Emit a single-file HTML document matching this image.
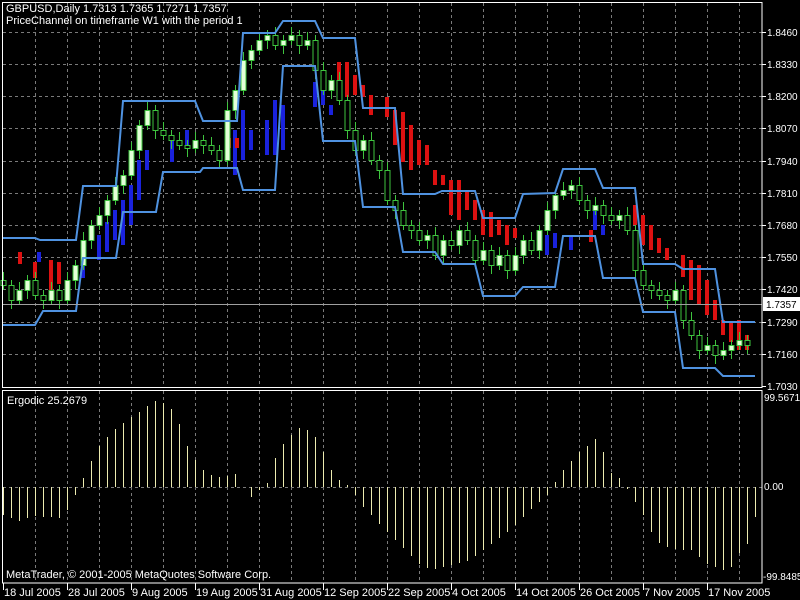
<!DOCTYPE html>
<html><head><meta charset="utf-8"><style>
html,body{margin:0;padding:0;background:#000;width:800px;height:600px;overflow:hidden}
svg{display:block}
text{font-family:"Liberation Sans",sans-serif;font-size:11px;fill:#fff}
.ra{font-size:10px}
.u{fill:#e4ffd8;stroke:#3ec43e;stroke-width:1}
.d{fill:#000;stroke:#3ec43e;stroke-width:1}
</style></head><body>
<svg width="800" height="600" xmlns="http://www.w3.org/2000/svg">
<rect width="800" height="600" fill="#000"/>
<path fill="none" stroke="#7a7a7a" stroke-dasharray="3,3" d="M3 32.5H762M3 64.5H762M3 96.5H762M3 128.5H762M3 161.5H762M3 193.5H762M3 225.5H762M3 257.5H762M3 289.5H762M3 322.5H762M3 354.5H762M3 487.5H762
M35.5 3V387M67.5 3V387M99.5 3V387M131.5 3V387M163.5 3V387M195.5 3V387M227.5 3V387M259.5 3V387M291.5 3V387M323.5 3V387M355.5 3V387M387.5 3V387M419.5 3V387M451.5 3V387M483.5 3V387M515.5 3V387M547.5 3V387M579.5 3V387M611.5 3V387M643.5 3V387M675.5 3V387M707.5 3V387M739.5 3V387
M35.5 391V583M67.5 391V583M99.5 391V583M131.5 391V583M163.5 391V583M195.5 391V583M227.5 391V583M259.5 391V583M291.5 391V583M323.5 391V583M355.5 391V583M387.5 391V583M419.5 391V583M451.5 391V583M483.5 391V583M515.5 391V583M547.5 391V583M579.5 391V583M611.5 391V583M643.5 391V583M675.5 391V583M707.5 391V583M739.5 391V583"/>
<g fill="#1a22dd">
<rect x="81" y="250" width="4" height="28"/><rect x="97" y="235" width="4" height="25"/><rect x="105" y="222" width="4" height="30"/><rect x="113" y="210" width="4" height="30"/><rect x="121" y="200" width="4" height="45"/><rect x="129" y="185" width="4" height="40"/><rect x="137" y="160" width="4" height="40"/><rect x="145" y="150" width="4" height="20"/>
<rect x="170" y="140" width="4" height="22"/><rect x="185" y="130" width="4" height="15"/>
<rect x="233" y="130" width="4" height="45"/><rect x="241" y="110" width="4" height="50"/><rect x="249" y="130" width="4" height="20"/><rect x="265" y="120" width="4" height="35"/><rect x="273" y="100" width="4" height="55"/><rect x="281" y="105" width="4" height="45"/><rect x="313" y="82" width="4" height="25"/><rect x="321" y="90" width="4" height="15"/><rect x="329" y="105" width="4" height="10"/>
<rect x="545" y="235" width="4" height="20"/><rect x="553" y="233" width="4" height="15"/><rect x="569" y="235" width="4" height="15"/><rect x="593" y="205" width="4" height="25"/><rect x="601" y="225" width="4" height="10"/><rect x="37" y="252" width="4" height="10"/>
</g>
<g fill="#dd1111">
<rect x="33" y="262" width="4" height="16"/><rect x="49" y="260" width="4" height="30"/><rect x="57" y="262" width="4" height="22"/><rect x="18" y="252" width="4" height="12"/>
<rect x="227" y="138" width="4" height="10"/><rect x="235" y="138" width="4" height="10"/>
<rect x="337" y="62" width="4" height="22"/><rect x="345" y="62" width="4" height="35"/><rect x="353" y="75" width="4" height="20"/><rect x="361" y="85" width="4" height="12"/><rect x="369" y="95" width="4" height="20"/><rect x="385" y="97" width="4" height="20"/><rect x="393" y="110" width="4" height="35"/><rect x="401" y="112" width="4" height="50"/><rect x="409" y="125" width="4" height="45"/><rect x="417" y="140" width="4" height="25"/><rect x="425" y="145" width="4" height="20"/><rect x="433" y="170" width="4" height="15"/><rect x="441" y="175" width="4" height="10"/><rect x="449" y="180" width="4" height="35"/><rect x="457" y="180" width="4" height="40"/><rect x="465" y="190" width="4" height="20"/><rect x="473" y="200" width="4" height="20"/><rect x="481" y="210" width="4" height="25"/><rect x="489" y="212" width="4" height="25"/><rect x="497" y="220" width="4" height="15"/><rect x="505" y="225" width="4" height="20"/><rect x="513" y="228" width="4" height="10"/>
<rect x="589" y="230" width="4" height="12"/><rect x="633" y="205" width="4" height="20"/><rect x="641" y="215" width="4" height="30"/><rect x="649" y="225" width="4" height="25"/><rect x="657" y="238" width="4" height="15"/><rect x="665" y="248" width="4" height="12"/>
<rect x="681" y="255" width="4" height="22"/><rect x="689" y="260" width="4" height="40"/><rect x="697" y="265" width="4" height="40"/><rect x="705" y="280" width="4" height="35"/><rect x="713" y="300" width="4" height="20"/><rect x="721" y="320" width="4" height="15"/><rect x="729" y="322" width="4" height="20"/><rect x="737" y="320" width="4" height="30"/><rect x="745" y="335" width="4" height="15"/>
</g>
<path fill="none" stroke="#3ec43e" d="M3.5 272V290M11.5 280V309M19.5 282V305M27.5 275V299M35.5 272V300M43.5 290V309M51.5 282V305M59.5 285V309M67.5 272V305M75.5 260V289M83.5 232V270M91.5 220V249M99.5 207V230M107.5 195V224M115.5 177V205M123.5 170V194M131.5 142V180M139.5 120V159M147.5 102V130M155.5 105V139M163.5 122V140M171.5 130V149M179.5 132V150M187.5 140V157M195.5 132V153M203.5 135V154M211.5 137V155M219.5 145V169M227.5 102V165M235.5 85V119M243.5 52V95M251.5 45V69M259.5 32V55M267.5 30V49M275.5 27V50M283.5 35V54M291.5 27V45M299.5 30V54M307.5 32V50M315.5 35V79M323.5 62V95M331.5 75V99M339.5 72V105M347.5 95V139M355.5 122V155M363.5 135V159M371.5 132V165M379.5 155V179M387.5 162V205M395.5 195V219M403.5 202V230M411.5 220V239M419.5 222V245M427.5 230V249M435.5 227V260M443.5 235V264M451.5 232V250M459.5 225V254M467.5 222V245M475.5 235V269M483.5 242V265M491.5 245V274M499.5 247V270M507.5 250V279M515.5 247V275M523.5 235V264M531.5 232V255M539.5 225V259M547.5 202V235M555.5 190V219M563.5 182V200M571.5 180V199M579.5 177V205M587.5 195V219M595.5 197V215M603.5 200V224M611.5 207V225M619.5 210V229M627.5 207V235M635.5 225V279M643.5 262V290M651.5 280V299M659.5 282V300M667.5 290V309M675.5 282V305M683.5 285V329M691.5 312V340M699.5 330V359M707.5 337V355M715.5 340V364M723.5 342V360M731.5 340V359M739.5 332V350M747.5 335V354"/>
<g class="d">
<rect x="1" y="280.5" width="5" height="5"/><rect x="9" y="285.5" width="5" height="15"/><rect x="33" y="280.5" width="5" height="15"/><rect x="41" y="295.5" width="5" height="5"/><rect x="57" y="290.5" width="5" height="10"/>
<rect x="153" y="110.5" width="5" height="20"/><rect x="161" y="130.5" width="5" height="5"/><rect x="169" y="135.5" width="5" height="5"/><rect x="177" y="140.5" width="5" height="5"/><rect x="185" y="145.5" width="5" height="3"/><rect x="201" y="140.5" width="5" height="5"/><rect x="209" y="145.5" width="5" height="5"/><rect x="217" y="150.5" width="5" height="10"/>
<rect x="273" y="35.5" width="5" height="10"/><rect x="297" y="35.5" width="5" height="10"/><rect x="313" y="40.5" width="5" height="30"/><rect x="321" y="70.5" width="5" height="20"/><rect x="337" y="80.5" width="5" height="20"/><rect x="345" y="100.5" width="5" height="30"/><rect x="353" y="130.5" width="5" height="20"/><rect x="369" y="140.5" width="5" height="20"/><rect x="377" y="160.5" width="5" height="10"/><rect x="385" y="170.5" width="5" height="30"/><rect x="393" y="200.5" width="5" height="10"/><rect x="401" y="210.5" width="5" height="15"/><rect x="409" y="225.5" width="5" height="5"/><rect x="417" y="230.5" width="5" height="10"/><rect x="433" y="235.5" width="5" height="20"/><rect x="449" y="240.5" width="5" height="5"/><rect x="465" y="230.5" width="5" height="10"/><rect x="473" y="240.5" width="5" height="20"/><rect x="489" y="250.5" width="5" height="15"/><rect x="505" y="255.5" width="5" height="15"/><rect x="529" y="240.5" width="5" height="10"/>
<rect x="577" y="185.5" width="5" height="15"/><rect x="585" y="200.5" width="5" height="10"/><rect x="601" y="205.5" width="5" height="10"/><rect x="609" y="215.5" width="5" height="5"/><rect x="625" y="215.5" width="5" height="15"/><rect x="633" y="230.5" width="5" height="40"/><rect x="641" y="270.5" width="5" height="15"/><rect x="649" y="285.5" width="5" height="5"/><rect x="657" y="290.5" width="5" height="5"/><rect x="665" y="295.5" width="5" height="5"/><rect x="681" y="290.5" width="5" height="30"/><rect x="689" y="320.5" width="5" height="15"/><rect x="697" y="335.5" width="5" height="15"/><rect x="713" y="345.5" width="5" height="10"/><rect x="745" y="340.5" width="5" height="5"/>
</g>
<g class="u">
<rect x="17" y="290.5" width="5" height="10"/><rect x="25" y="280.5" width="5" height="10"/><rect x="49" y="290.5" width="5" height="10"/><rect x="65" y="280.5" width="5" height="20"/><rect x="73" y="265.5" width="5" height="15"/><rect x="81" y="240.5" width="5" height="25"/><rect x="89" y="225.5" width="5" height="15"/><rect x="97" y="215.5" width="5" height="10"/><rect x="105" y="200.5" width="5" height="15"/><rect x="113" y="185.5" width="5" height="15"/><rect x="121" y="175.5" width="5" height="10"/><rect x="129" y="150.5" width="5" height="25"/><rect x="137" y="125.5" width="5" height="25"/><rect x="145" y="110.5" width="5" height="15"/><rect x="193" y="140.5" width="5" height="8"/>
<rect x="225" y="110.5" width="5" height="50"/><rect x="233" y="90.5" width="5" height="20"/><rect x="241" y="60.5" width="5" height="30"/><rect x="249" y="50.5" width="5" height="10"/><rect x="257" y="40.5" width="5" height="10"/><rect x="265" y="35.5" width="5" height="5"/><rect x="281" y="40.5" width="5" height="5"/><rect x="289" y="35.5" width="5" height="5"/><rect x="305" y="40.5" width="5" height="5"/><rect x="329" y="80.5" width="5" height="10"/><rect x="361" y="140.5" width="5" height="10"/>
<rect x="425" y="235.5" width="5" height="5"/><rect x="441" y="240.5" width="5" height="15"/><rect x="457" y="230.5" width="5" height="15"/><rect x="481" y="250.5" width="5" height="10"/><rect x="497" y="255.5" width="5" height="10"/><rect x="513" y="255.5" width="5" height="15"/><rect x="521" y="240.5" width="5" height="15"/><rect x="537" y="230.5" width="5" height="20"/><rect x="545" y="210.5" width="5" height="20"/><rect x="553" y="195.5" width="5" height="15"/><rect x="561" y="190.5" width="5" height="5"/><rect x="569" y="185.5" width="5" height="5"/><rect x="593" y="205.5" width="5" height="5"/><rect x="617" y="215.5" width="5" height="5"/><rect x="673" y="290.5" width="5" height="10"/><rect x="705" y="345.5" width="5" height="5"/><rect x="721" y="350.5" width="5" height="5"/><rect x="729" y="345.5" width="5" height="5"/><rect x="737" y="340.5" width="5" height="5"/>
</g>
<g fill="none" stroke="#4f92e0" stroke-width="2">
<polyline points="3,238 35,238 40,240 76,240 83,186 116,186 123,101 195,101 203,121 237,121 243,33 275,33 283,21 315,21 323,38 355,38 363,108 395,108 403,194 435,194 442,191 475,191 483,218 515,218 523,194 555,193 563,169 595,169 603,188 635,188 643,264 675,264 683,269 715,269 723,322 755,322"/>
<polyline points="3,325 35,325 43,311 76,311 83,258 116,258 123,212 156,212 163,172 200,172 203,168 237,168 243,190 275,190 283,66 315,66 323,141 355,141 363,207 395,207 403,252 435,252 443,264 475,264 483,296 515,296 523,287 555,287 563,236 595,236 603,278 635,278 643,312 675,312 683,368 715,368 723,376 755,376"/>
</g>
<path fill="none" stroke="#ecebb0" d="M3.5 487V515M11.5 487V518M19.5 487V521M27.5 487V518M35.5 487V516M43.5 487V517M51.5 487V517M59.5 487V518M67.5 487V510M75.5 487V495M83.5 487V478M91.5 487V461M99.5 487V446M107.5 487V437M115.5 487V429M123.5 487V423M131.5 487V417M139.5 487V412M147.5 487V406M155.5 487V401M163.5 487V403M171.5 487V409M179.5 487V424M187.5 487V446M195.5 487V460M203.5 487V470M211.5 487V475M219.5 487V477M227.5 487V476M235.5 487V474M251.5 487V497M259.5 487V490M267.5 487V483M275.5 487V458M283.5 487V444M291.5 487V435M299.5 487V428M307.5 487V430M315.5 487V437M323.5 487V452M331.5 487V470M339.5 487V480M347.5 487V485M355.5 487V495M363.5 487V507M371.5 487V515M379.5 487V524M387.5 487V532M395.5 487V540M403.5 487V548M411.5 487V556M419.5 487V564M427.5 487V568M435.5 487V569M443.5 487V567M451.5 487V565M459.5 487V563M467.5 487V561M475.5 487V556M483.5 487V550M491.5 487V544M499.5 487V538M507.5 487V532M515.5 487V525M523.5 487V517M531.5 487V509M539.5 487V502M547.5 487V495M555.5 487V482M563.5 487V470M571.5 487V461M579.5 487V452M587.5 487V446M595.5 487V439M603.5 487V452M611.5 487V473M619.5 487V478M627.5 487V489M635.5 487V502M643.5 487V515M651.5 487V532M659.5 487V543M667.5 487V547M675.5 487V549M683.5 487V550M691.5 487V550M699.5 487V557M707.5 487V564M715.5 487V567M723.5 487V570M731.5 487V567M739.5 487V553M747.5 487V544M755.5 487V517"/>
<line x1="3" y1="304.5" x2="762" y2="304.5" stroke="#a0a0a0"/>
<g stroke="#fff" stroke-width="1" fill="none">
<rect x="2.5" y="2.5" width="759.5" height="385"/>
<rect x="2.5" y="390.5" width="759.5" height="192.5"/>
<path d="M762 32.5h4M762 64.5h4M762 96.5h4M762 128.5h4M762 161.5h4M762 193.5h4M762 225.5h4M762 257.5h4M762 289.5h4M762 322.5h4M762 354.5h4M762 386.5h4M3.5 583v7M67.5 583v7M131.5 583v7M195.5 583v7M259.5 583v7M323.5 583v7M387.5 583v7M451.5 583v7M515.5 583v7M579.5 583v7M643.5 583v7M707.5 583v7"/>
</g>
<g class="ra">
<text class="ra" x="767" y="36">1.8460</text><text class="ra" x="767" y="68">1.8330</text><text class="ra" x="767" y="100">1.8200</text><text class="ra" x="767" y="132">1.8070</text><text class="ra" x="767" y="165">1.7940</text><text class="ra" x="767" y="197">1.7810</text><text class="ra" x="767" y="229">1.7680</text><text class="ra" x="767" y="261">1.7550</text><text class="ra" x="767" y="293">1.7420</text><text class="ra" x="767" y="326">1.7290</text><text class="ra" x="767" y="358">1.7160</text><text class="ra" x="767" y="390">1.7030</text>
<text class="ra" x="764" y="401">99.5671</text><text class="ra" x="764" y="490">0.00</text><text class="ra" x="763" y="580">-99.8485</text>
</g>
<text x="4" y="596">18 Jul 2005</text><text x="68" y="596">28 Jul 2005</text><text x="132" y="596">9 Aug 2005</text><text x="196" y="596">19 Aug 2005</text><text x="260" y="596">31 Aug 2005</text><text x="324" y="596">12 Sep 2005</text><text x="388" y="596">22 Sep 2005</text><text x="452" y="596">4 Oct 2005</text><text x="516" y="596">14 Oct 2005</text><text x="580" y="596">26 Oct 2005</text><text x="644" y="596">7 Nov 2005</text><text x="708" y="596">17 Nov 2005</text>
<rect x="763" y="297" width="37" height="14" fill="#fff"/>
<text class="ra" x="766" y="308" style="fill:#000">1.7357</text>
<text x="6" y="12">GBPUSD,Daily  1.7313 1.7365 1.7271 1.7357</text>
<text x="6" y="24">PriceChannel on timeframe W1 with the period 1</text>
<text x="7" y="404">Ergodic 25.2679</text>
<text x="6" y="578">MetaTrader, © 2001-2005 MetaQuotes Software Corp.</text>
</svg>
</body></html>
